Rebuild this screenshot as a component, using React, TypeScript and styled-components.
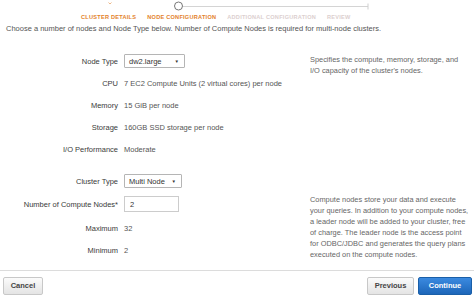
import React from 'react';
import styled, { createGlobalStyle } from 'styled-components';

const GlobalStyle = createGlobalStyle`
  html, body {
    margin: 0;
    padding: 0;
    background: #ffffff;
  }
  body {
    font-family: 'Liberation Sans', Arial, sans-serif;
    color: #555;
  }
`;

const Page = styled.div`
  width: 474px;
  height: 298px;
  display: flex;
  flex-direction: column;
  overflow: hidden;
`;

const Stepper = styled.div`
  height: 22px;
  display: flex;
  flex-direction: column;
`;

const Track = styled.svg`
  display: block;
`;

const StepLabels = styled.div`
  display: flex;
  gap: 11px;
  padding-left: 81px;
`;

const StepLabel = styled.span<{ $state: 'done' | 'active' | 'todo' }>`
  font-size: 5.6px;
  font-weight: bold;
  letter-spacing: 0.25px;
  line-height: 8px;
  color: ${(p) => (p.$state === 'todo' ? '#dccfcf' : '#e3812a')};
`;

const Intro = styled.p`
  margin: 2px 0 0 6px;
  font-size: 7.5px;
  line-height: 10px;
  color: #555;
  height: 26px;
`;

const Section = styled.div<{ $height: number }>`
  display: flex;
  height: ${(p) => p.$height}px;
`;

const Fields = styled.div`
  width: 310px;
  display: flex;
  flex-direction: column;
`;

const Row = styled.div<{ $h: number }>`
  display: grid;
  grid-template-columns: 118px 1fr;
  column-gap: 6px;
  align-items: center;
  height: ${(p) => p.$h}px;
  font-size: 7.5px;
`;

const Label = styled.span`
  text-align: right;
  color: #3a3a3a;
  white-space: nowrap;
`;

const Value = styled.span`
  color: #555;
  white-space: nowrap;
`;

const Help = styled.p<{ $top: number }>`
  margin: ${(p) => p.$top}px 0 0 0;
  width: 162px;
  font-size: 7.4px;
  line-height: 11px;
  color: #666;
`;

const Select = styled.span<{ $w: number }>`
  box-sizing: border-box;
  display: inline-flex;
  align-items: center;
  justify-content: space-between;
  width: ${(p) => p.$w}px;
  height: 14px;
  padding: 0 5px 0 4px;
  border: 1px solid #b5b5b5;
  border-radius: 1px;
  background: #fff;
  color: #333;
  font-size: 7.5px;
`;

const Arrow = styled.span`
  font-size: 4.5px;
  color: #333;
`;

const Input = styled.span`
  box-sizing: border-box;
  display: inline-flex;
  align-items: center;
  width: 55px;
  height: 16px;
  padding-left: 5px;
  border: 1px solid #ccc;
  background: #fff;
  color: #333;
  font-size: 7.5px;
`;

const Footer = styled.div`
  margin-top: auto;
  border-top: 1px solid #dcdcdc;
  height: 27px;
  display: flex;
  align-items: center;
  padding: 0 2px 0 3px;
  gap: 4px;
`;

const Spacer = styled.div`
  flex: 1;
`;

const Button = styled.button<{ $primary?: boolean; $w: number }>`
  box-sizing: border-box;
  width: ${(p) => p.$w}px;
  height: 18px;
  margin-top: 2px;
  padding: 0;
  border-radius: 2px;
  font-family: 'Liberation Sans', Arial, sans-serif;
  font-size: 7.5px;
  font-weight: bold;
  border: 1px solid ${(p) => (p.$primary ? '#1a5fa8' : '#c8c8c8')};
  color: ${(p) => (p.$primary ? '#ffffff' : '#444')};
  background: ${(p) =>
    p.$primary
      ? 'linear-gradient(#3b8ae0, #1d66b9)'
      : 'linear-gradient(#fbfbfb, #e4e4e4)'};
`;

const App = () => {
  return (
    <>
      <GlobalStyle />
      <Page>
        <Stepper>
          <Track width="474" height="13" viewBox="0 0 474 13">
            <defs>
              <linearGradient id="done" x1="0" x2="1">
                <stop offset="0" stopColor="#f4c79e" stopOpacity="0.3" />
                <stop offset="0.15" stopColor="#f1b582" />
                <stop offset="1" stopColor="#ee9f5a" />
              </linearGradient>
            </defs>
            <line x1="72" y1="6.5" x2="174" y2="6.5" stroke="url(#done)" strokeWidth="1" />
            <line x1="183" y1="6.5" x2="368" y2="6.5" stroke="#d4d4d4" strokeWidth="1" />
            <line x1="368" y1="3.5" x2="368" y2="9.5" stroke="#cfcfcf" strokeWidth="1" />
            <path d="M108.5 2.5 L110 4 L111.5 2.5" fill="none" stroke="#e9a66b" strokeWidth="0.8" />
            <circle cx="178.5" cy="6" r="4" fill="#fff" stroke="#777" strokeWidth="1" />
          </Track>
          <StepLabels>
            <StepLabel $state="done">CLUSTER DETAILS</StepLabel>
            <StepLabel $state="active">NODE CONFIGURATION</StepLabel>
            <StepLabel $state="todo">ADDITIONAL CONFIGURATION</StepLabel>
            <StepLabel $state="todo">REVIEW</StepLabel>
          </StepLabels>
        </Stepper>
        <Intro>
          Choose a number of nodes and Node Type below. Number of Compute Nodes is required for
          multi-node clusters.
        </Intro>

        <Section $height={120}>
          <Fields>
            <Row $h={22}>
              <Label>Node Type</Label>
              <Value>
                <Select $w={61}>
                  dw2.large<Arrow>▼</Arrow>
                </Select>
              </Value>
            </Row>
            <Row $h={22}>
              <Label>CPU</Label>
              <Value>7 EC2 Compute Units (2 virtual cores) per node</Value>
            </Row>
            <Row $h={22}>
              <Label>Memory</Label>
              <Value>15 GiB per node</Value>
            </Row>
            <Row $h={22}>
              <Label>Storage</Label>
              <Value>160GB SSD storage per node</Value>
            </Row>
            <Row $h={22}>
              <Label>I/O Performance</Label>
              <Value>Moderate</Value>
            </Row>
          </Fields>
          <Help $top={4}>
            Specifies the compute, memory, storage, and
            <br />
            I/O capacity of the cluster's nodes.
          </Help>
        </Section>

        <Section $height={92}>
          <Fields>
            <Row $h={22}>
              <Label>Cluster Type</Label>
              <Value>
                <Select $w={58}>
                  Multi Node<Arrow>▼</Arrow>
                </Select>
              </Value>
            </Row>
            <Row $h={24}>
              <Label>Number of Compute Nodes*</Label>
              <Value>
                <Input>2</Input>
              </Value>
            </Row>
            <Row $h={24}>
              <Label>Maximum</Label>
              <Value>32</Value>
            </Row>
            <Row $h={20}>
              <Label>Minimum</Label>
              <Value>2</Value>
            </Row>
          </Fields>
          <Help $top={24}>
            Compute nodes store your data and execute your queries. In addition to your compute
            nodes, a leader node will be added to your cluster, free of charge. The leader node is
            the access point for ODBC/JDBC and generates the query plans executed on the compute
            nodes.
          </Help>
        </Section>

        <Footer>
          <Button $w={40}>Cancel</Button>
          <Spacer />
          <Button $w={47}>Previous</Button>
          <Button $w={54} $primary>
            Continue
          </Button>
        </Footer>
      </Page>
    </>
  );
};

export default App;
